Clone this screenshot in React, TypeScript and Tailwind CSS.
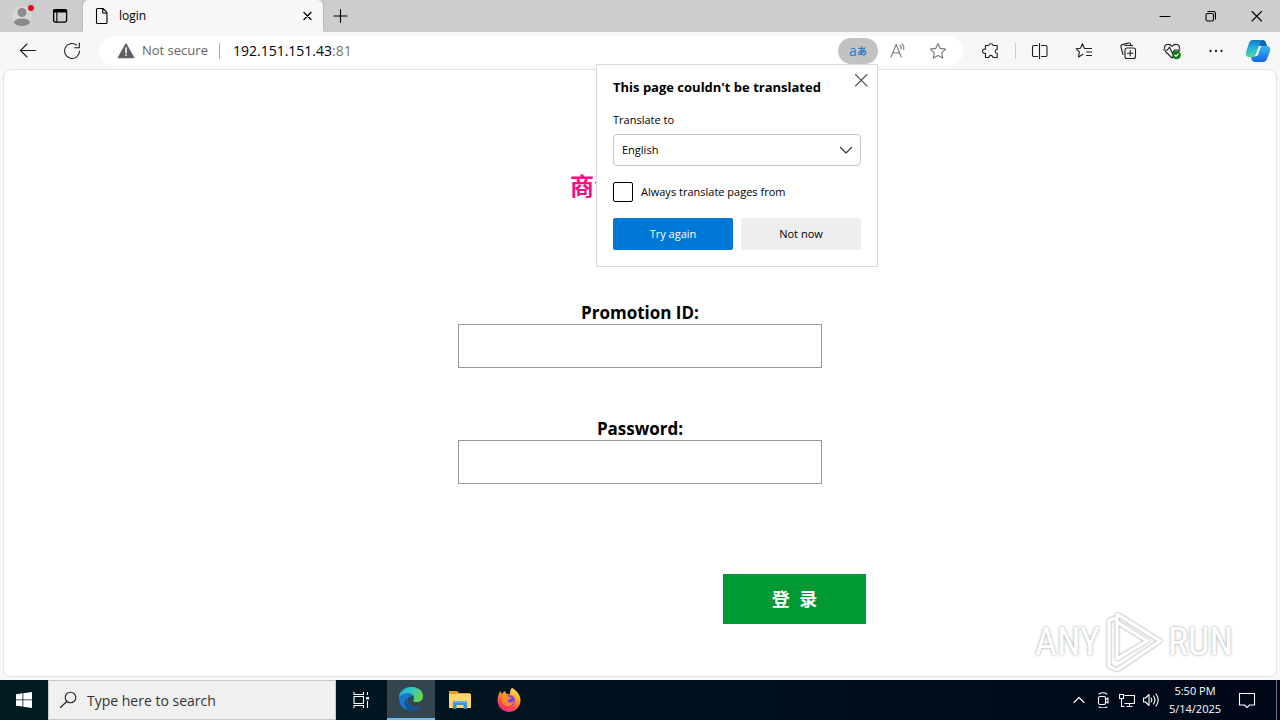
import type { ReactNode } from "react";

type IconProps = { className?: string; size?: number; children: ReactNode };

function Icon({ className = "", size = 20, children }: IconProps) {
  return (
    <svg
      className={`shrink-0 ${className}`}
      width={size}
      height={size}
      viewBox={`0 0 ${size} ${size}`}
      fill="none"
      stroke="currentColor"
      strokeWidth="1.1"
      strokeLinecap="round"
      strokeLinejoin="round"
      aria-hidden="true"
    >
      {children}
    </svg>
  );
}

function TitleBar() {
  return (
    <header className="flex h-8 bg-[#cdcdcd]">
      <div className="flex w-[83px] items-center rounded-br-md border-r border-[#bcbcbc]">
        <button aria-label="Profile" className="relative ml-3 flex size-5 items-center justify-center rounded-full bg-[#d9d7d5] text-[#8b8b8b]">
          <Icon size={20}>
            <circle cx="10" cy="6.5" r="4.5" fill="currentColor" stroke="none" />
            <path d="M2 17q0-4.500 8-4.500t8 4.500q-3 3-8 3t-8-3z" fill="currentColor" stroke="none" />
          </Icon>
          <span className="absolute -top-px -right-0.5 size-1.5 rounded-full bg-[#e00b1c]" />
        </button>
        <button aria-label="Tab actions" className="ml-[18px]">
          <Icon size={20}>
            <rect x="3.600" y="3.600" width="13" height="12.500" rx="2" strokeWidth="1.300" />
            <path d="M4 5.500h12.200M4 4.500h12.200" strokeWidth="2" />
            <path d="M6.800 6v10" />
          </Icon>
        </button>
      </div>
      <div className="flex w-60 items-center rounded-t-md bg-[#f7f7f7] pl-2.5 pr-1.5">
        <Icon size={18}>
          <path d="M3.500 2.500a1 1 0 0 1 1-1h5.500l4 4.200V15.500a1 1 0 0 1-1 1H4.500a1 1 0 0 1-1-1zM9.700 1.700v4.300h4.200" />
        </Icon>
        <span className="ml-2 flex-1 text-[12px] leading-4">login</span>
        <button aria-label="Close tab">
          <Icon size={20}>
            <path d="M7 6.500l7 7M14 6.500l-7 7" strokeWidth="1.300" />
          </Icon>
        </button>
      </div>
      <button aria-label="New tab" className="flex w-8 items-center justify-center rounded-bl-md border-l border-[#bcbcbc]">
        <Icon size={20}>
          <path d="M10.500 3.500v13M4 10h13" />
        </Icon>
      </button>
      <div className="ml-auto flex">
        <button aria-label="Minimize" className="flex w-[46px] items-center justify-center">
          <Icon size={16}>
            <path d="M3 8.500h10" />
          </Icon>
        </button>
        <button aria-label="Restore" className="flex w-[46px] items-center justify-center">
          <Icon size={16}>
            <rect x="3" y="5.500" width="7.500" height="7.500" rx="1.500" />
            <path d="M5 3.500h5.500a2 2 0 0 1 2 2v5.500" />
          </Icon>
        </button>
        <button aria-label="Close" className="flex w-[46px] items-center justify-center">
          <Icon size={16}>
            <path d="M3 3.500l9.500 9.500M12.500 3.500l-9.500 9.500" />
          </Icon>
        </button>
      </div>
    </header>
  );
}

function TranslatePopup() {
  return (
    <div role="dialog" aria-labelledby="translate-title" className="absolute top-full right-0 z-10 w-[282px] border border-[#d8d8d8] bg-white p-4 pt-3 text-[12px] leading-4 text-black">
      <h2 id="translate-title" className="text-[13px] leading-5 font-bold">This page couldn't be translated</h2>
      <button aria-label="Close" className="absolute top-[7px] right-2 text-[#555]">
        <Icon size={16}>
          <path d="M2.500 2.500l11.500 11.500M14 2.500l-11.500 11.500" />
        </Icon>
      </button>
      <label htmlFor="language" className="mt-[15px] block text-[11px]">Translate to</label>
      <div className="relative mt-1.5">
        <select id="language" className="h-8 w-full appearance-none rounded-sm border border-[#c6c6c6] bg-white px-2 text-[11px]">
          <option>English</option>
        </select>
        <Icon size={16} className="pointer-events-none absolute top-2 right-[7px] text-[#333]">
          <path d="M2.500 5.500l5.500 5.500 5.500-5.500" />
        </Icon>
      </div>
      <div className="mt-4 flex h-5 items-center gap-2">
        <input id="always" type="checkbox" className="size-5 appearance-none rounded-xs border border-black bg-white" />
        <label htmlFor="always" className="text-[11px]">Always translate pages from</label>
      </div>
      <div className="mt-4 grid grid-cols-2 gap-2">
        <button className="h-8 rounded-xs bg-[#0078d7] text-[11px] text-white">Try again</button>
        <button className="h-8 rounded-xs bg-[#eeeeee] text-[11px]">Not now</button>
      </div>
    </div>
  );
}

function ToolButton({ label, children }: { label: string; children: ReactNode }) {
  return (
    <button aria-label={label} className="flex h-8 w-11 items-center justify-center text-[#1f1f1f]">
      {children}
    </button>
  );
}

function Toolbar() {
  return (
    <div className="flex h-[37px] items-center bg-[#f7f7f7] pt-px pl-1.5 pr-0.5">
      <ToolButton label="Back">
        <Icon>
          <path d="M17.500 9.500H3M9 3L2.500 9.500 9 16" />
        </Icon>
      </ToolButton>
      <ToolButton label="Refresh">
        <Icon>
          <path d="M17.500 10a7.500 7.500 0 1 1-3-6M17.300 2v4.700h-4.700" />
        </Icon>
      </ToolButton>
      <div className="ml-[5px] flex h-[30px] flex-1 items-center rounded-full bg-white pl-[18px] pr-[5px]">
        <Icon size={18} className="text-[#5f5f5f]">
          <path d="M9 2L1.500 15.500h15z" fill="currentColor" strokeWidth="1.500" />
          <path d="M9 6v5M9 13v.5" stroke="#fff" strokeWidth="1.500" />
        </Icon>
        <span className="ml-[7px] text-[13px] text-[#666]">Not secure</span>
        <span className="ml-[11px] h-4 w-px bg-[#aaa]" />
        <div role="textbox" tabIndex={0} aria-label="Address" className="ml-[13px] flex-1 text-[14px] leading-5 text-black">
          192.151.151.43<span className="text-[#767676]">:81</span>
        </div>
        <div className="relative">
          <button aria-label="Translate" className="flex h-[26px] w-10 items-center justify-center rounded-full bg-[#c2c2c2] text-[#1a80cc]">
            <span className="text-[14px] leading-4">a</span>
            <span className="text-[10px] leading-4 font-bold">あ</span>
          </button>
          <TranslatePopup />
        </div>
        <button aria-label="Read aloud" className="flex w-10 items-center justify-center text-[#777]">
          <Icon>
            <path d="M3 16L8.200 3.500 13.300 16M4.700 12h7M12 4.500q1.500 1.500 1.200 3.500M14 2.800q2.500 2.500 1.700 5.700" />
          </Icon>
        </button>
        <button aria-label="Add to favorites" className="flex w-10 items-center justify-center text-[#777]">
          <Icon>
            <path d="M10 2.500l2.300 4.900 5.300.7-3.900 3.700 1 5.300L10 14.500l-4.700 2.600 1-5.300L2.400 8.100l5.300-.7z" />
          </Icon>
        </button>
      </div>
      <div className="ml-1.5 flex items-center">
        <ToolButton label="Extensions">
          <Icon>
            <path d="M4.500 4.500h3.200a2.200 2.200 0 0 1 4.300 0h4.200v4a1.900 1.900 0 1 0 0 3.800v4.200H12a2 2 0 1 0-4.200 0H4.500v-4.200a2.200 2.200 0 1 1 0-4.100z" />
          </Icon>
        </ToolButton>
        <span className="mx-0.5 h-4 w-px bg-[#ccc]" />
        <ToolButton label="Split screen">
          <Icon>
            <path d="M7.500 4.500H4a1.500 1.500 0 0 0-1.500 1.500v8A1.500 1.500 0 0 0 4 15.500h3.500M11.500 4.500H15.500A1.500 1.500 0 0 1 17 6v8a1.500 1.500 0 0 1-1.500 1.500H11.500M9.500 2.500v15" />
          </Icon>
        </ToolButton>
        <ToolButton label="Favorites">
          <Icon>
            <path d="M10.500 7.500H17.500M12.500 11H17.500M12.500 14.500H17.500M10.500 7.500L8.500 2.700 6.500 7.200 2 7.700l3.400 3.200L4.500 16 9 13.300" />
          </Icon>
        </ToolButton>
        <ToolButton label="Collections">
          <Icon>
            <rect x="7" y="7" width="10.500" height="10.500" rx="2" />
            <path d="M12.200 9.500v5.500M9.500 12.200h5.500M5 13.500l-2-7.500a2 2 0 0 1 1.400-2.400l6-1.500a2 2 0 0 1 2.400 1.400l.3 1.200M7 4.500h7.500" />
          </Icon>
        </ToolButton>
        <ToolButton label="Browser essentials">
          <Icon>
            <path d="M3.500 10.500L10 17l7-7M2.500 7.500C2 3 7.500 2 10 5.500 12.500 2 18 3 17.500 7.500M1.500 9h4L7.500 6l3 6.500L12.500 9h5.500" />
            <circle cx="14.500" cy="14" r="3.800" fill="#107c10" stroke="#107c10" />
            <path d="M12.800 14.200l1.200 1.200 2.300-2.600" stroke="#fff" />
          </Icon>
        </ToolButton>
        <ToolButton label="Settings and more">
          <Icon>
            <path d="M4.500 10h.01M10 10h.01M15.500 10h.01" strokeWidth="2.300" />
          </Icon>
        </ToolButton>
        <button aria-label="Copilot" className="flex w-10 items-center justify-center">
          <svg width="26" height="26" viewBox="0 0 26 26" aria-hidden="true">
            <defs>
              <linearGradient id="cp-a" x1="0" y1="0" x2="0" y2="1">
                <stop offset="0" stopColor="#1679c4" />
                <stop offset=".5" stopColor="#22b5dc" />
                <stop offset="1" stopColor="#58d59a" />
              </linearGradient>
              <linearGradient id="cp-b" x1="0" y1="0" x2="0" y2="1">
                <stop offset="0" stopColor="#35b9ef" />
                <stop offset="1" stopColor="#1765e3" />
              </linearGradient>
            </defs>
            <path d="M8 2h9q3 0 4 3l1 3h-5q-2 0-3 3l-2 6q-1 2-3 2H4q-4 0-3-5L4 5q1-3 4-3z" fill="url(#cp-a)" />
            <path d="M17 2q3 0 4 3l1 3h-5l-3-1z" fill="#1565b5" />
            <path d="M17.500 8H22q4 0 3 5l-3 8q-1 3-4 3H10q-3 0-3.500-3L6 19h3q2 0 3-3l2-5q1-3 3.500-3z" fill="url(#cp-b)" />
            <path d="M14.500 8h2.200q-1 1-1.500 2.500L13.300 16q-.6 2-1.800 2H9.600q1-.8 1.500-2.300l1.800-5.500Q13.500 8.300 14.500 8z" fill="#f7f7f7" />
          </svg>
        </button>
      </div>
    </div>
  );
}

function Field({ id, label, type }: { id: string; label: string; type: string }) {
  return (
    <div className="flex w-[364px] flex-col">
      <label htmlFor={id} className="text-center text-[17px] leading-[22px] font-bold">{label}</label>
      <input id={id} type={type} className="h-11 border border-[#999] bg-white px-2" />
    </div>
  );
}

function Watermark() {
  return (
    <div className="absolute right-[43px] bottom-0.5 flex items-center text-[38px] leading-none text-white [font-family:'Liberation_Sans_Narrow','Roboto_Condensed','DejaVu_Sans_Condensed',sans-serif] [text-shadow:0_0_3px_#999]">
      <span>ANY</span>
      <svg className="mx-1" width="60" height="64" viewBox="0 0 60 64" fill="none" stroke="#fff" strokeWidth="3.500" strokeLinejoin="round" aria-hidden="true">
        <g className="drop-shadow-[0_0_1px_#888]">
          <path d="M13 4L56 31 13 60M13 4v45l30-18L13 12M5 10v46l8 4M5 10l8-2" />
        </g>
      </svg>
      <span>RUN</span>
    </div>
  );
}

function LoginPage() {
  return (
    <main className="relative mx-[3px] mb-[3px] flex flex-1 flex-col items-center rounded-lg border border-[#e4e4e4] bg-white">
      <h1 className="mt-[98px] h-9 w-[140px] text-2xl leading-9 font-bold text-[#ee1289]">商会</h1>
      <form className="mt-[98px] flex w-[452px] flex-col items-center gap-[50px]" onSubmit={(e) => e.preventDefault()}>
        <Field id="promotion" label="Promotion ID:" type="text" />
        <Field id="password" label="Password:" type="password" />
        <button className="mt-10 h-[50px] w-[143px] self-end bg-[#009933] text-[18px] font-bold text-white">登&nbsp;&nbsp;录</button>
      </form>
      <Watermark />
    </main>
  );
}

function Taskbar() {
  return (
    <footer className="flex h-10 bg-linear-to-r from-[#001b22] to-[#000818] text-white">
      <button aria-label="Start" className="flex w-12 items-center justify-center">
        <svg width="16" height="16" viewBox="0 0 16 16" fill="#fff" aria-hidden="true">
          <path d="M0 2.200L6.500 1.300V7.500H0zM7.300 1.200L16 0v7.500H7.300zM0 8.300h6.500v6.300L0 13.700zM7.300 8.300H16V16l-8.700-1.200z" />
        </svg>
      </button>
      <div className="flex w-72 items-center border border-[#c8c8c8] bg-[#f0f0f0] pl-2.5 text-[#222]">
        <Icon size={20}>
          <circle cx="11.500" cy="7.500" r="5.300" />
          <path d="M7.700 11.500L1.500 17.500" />
        </Icon>
        <input aria-label="Search" placeholder="Type here to search" className="ml-2 w-full bg-transparent text-[14px] text-[#222] placeholder:text-[#333]" />
      </div>
      <button aria-label="Task view" className="flex w-[51px] items-center justify-center">
        <Icon size={20}>
          <path d="M2 2v2.500h9.500V2M2 18v-2.500h9.500V18M2 6.500h9.500v7H2zM15.500 2v3M15.500 11v7" strokeLinecap="butt" />
          <path d="M14 7h3v2.500h-3z" fill="currentColor" stroke="none" />
        </Icon>
      </button>
      <button aria-label="Microsoft Edge" className="flex w-12 items-center justify-center border-b-2 border-[#76b9ed] bg-[#33454e]">
        <svg width="24" height="24" viewBox="0 0 24 24" aria-hidden="true">
          <defs>
            <linearGradient id="edge-top" x1="0" y1="0" x2="1" y2=".4">
              <stop offset="0" stopColor="#1fa5df" />
              <stop offset=".5" stopColor="#2fc6c5" />
              <stop offset="1" stopColor="#62d751" />
            </linearGradient>
          </defs>
          <path d="M0 11C0-3.500 24-3.500 24 9.500c0 5-5.500 6.500-9.500 5-1-.8.500-1.500.500-3.500C15 5 4 5 0 11z" fill="url(#edge-top)" />
          <path d="M0 11c1-5 12-6.500 14.500-1.500C10 8 7 12 9 16c2 4.500 8.500 5.500 13.500 2C17 26.500 0 26 0 11z" fill="#1878cd" />
          <path d="M8.500 11c-3 7 6 12 14 7-3 5-10 7-14 4.500-4-3-4-8.500 0-11.500z" fill="#11539f" />
        </svg>
      </button>
      <button aria-label="File Explorer" className="flex w-[50px] items-center justify-center">
        <svg width="22" height="20" viewBox="0 0 22 20" aria-hidden="true">
          <path d="M0 1h8l2 2h11v4H0z" fill="#e4a22b" />
          <path d="M0 4h22v14H0z" fill="#fbd66c" />
          <path d="M4 19v-8h14v8h-3.500v-4h-7v4z" fill="#3c91cf" />
          <path d="M4 11h14v2H4z" fill="#5cb0e6" />
        </svg>
      </button>
      <button aria-label="Firefox" className="flex w-12 items-center justify-center">
        <svg width="24" height="24" viewBox="0 0 24 24" aria-hidden="true">
          <defs>
            <linearGradient id="fox" x1=".8" y1="0" x2=".3" y2="1">
              <stop offset="0" stopColor="#fff04a" />
              <stop offset=".4" stopColor="#ff9a25" />
              <stop offset=".75" stopColor="#ff4055" />
              <stop offset="1" stopColor="#e62a83" />
            </linearGradient>
          </defs>
          <path d="M15 0c4 2 9 7 8.500 13C23 19.500 18 24 12 24S.5 19 .5 12.500C.5 8 2 6 3 3l2 3q2-3 3-3 0 2 2 3l3 .2C13 4 13 2 15 0z" fill="url(#fox)" />
          <circle cx="12.500" cy="12.500" r="5.500" fill="#7b43dc" />
          <path d="M4 7c4-1.500 6 0 8 2l2.500.5c-1 2-4 1.500-4 3.500 1 2 5 2.500 7-1-1 7-9 8-12 3z" fill="#ff8a2a" />
        </svg>
      </button>
      <div className="ml-auto flex items-center">
        <button aria-label="Show hidden icons" className="flex w-6 justify-center">
          <Icon size={16}><path d="M3 10.500l5-5 5 5" /></Icon>
        </button>
        <button aria-label="Screen capture" className="flex w-6 justify-center">
          <Icon size={16}>
            <rect x="3.500" y="4.500" width="7" height="8" rx="1.500" />
            <path d="M10.500 7.500l2.500-1.500v5l-2.500-1.500M4 2q4-2.500 8 0M4 15q4 2 8 0" />
          </Icon>
        </button>
        <button aria-label="Network" className="flex w-6 justify-center">
          <Icon size={16}>
            <path d="M5.500 3.500h10v8h-10M7.500 14.500h6M10.500 11.500v3M.5 2.500h4v4h-4zM2.500 6.500v8h3" strokeLinecap="butt" strokeLinejoin="miter" />
          </Icon>
        </button>
        <button aria-label="Volume" className="flex w-6 justify-center">
          <Icon size={18}>
            <path d="M1.500 7h2L7 3.500v11L3.500 11h-2zM9 7q1.500 2 0 4M11.500 5q3 4 0 8M14 3q4.500 6 0 12" />
          </Icon>
        </button>
        <time className="w-16 text-center text-[11px] leading-[18px]">
          5:50 PM<br />5/14/2025
        </time>
        <button aria-label="Notifications" className="flex w-10 justify-center">
          <Icon size={18}>
            <path d="M1.500 2.500h15v11.500h-5l-2.500 2.500L6.500 14h-5z" strokeLinejoin="miter" />
          </Icon>
        </button>
        <span className="ml-[9px] h-10 w-1 border-l border-[#6b7280]" />
      </div>
    </footer>
  );
}

export default function App() {
  return (
    <div className="flex min-h-screen flex-col bg-[#f5f7f8] text-black [font-family:'Open_Sans','Noto_Sans_CJK_SC',sans-serif]">
      <TitleBar />
      <Toolbar />
      <LoginPage />
      <Taskbar />
    </div>
  );
}
